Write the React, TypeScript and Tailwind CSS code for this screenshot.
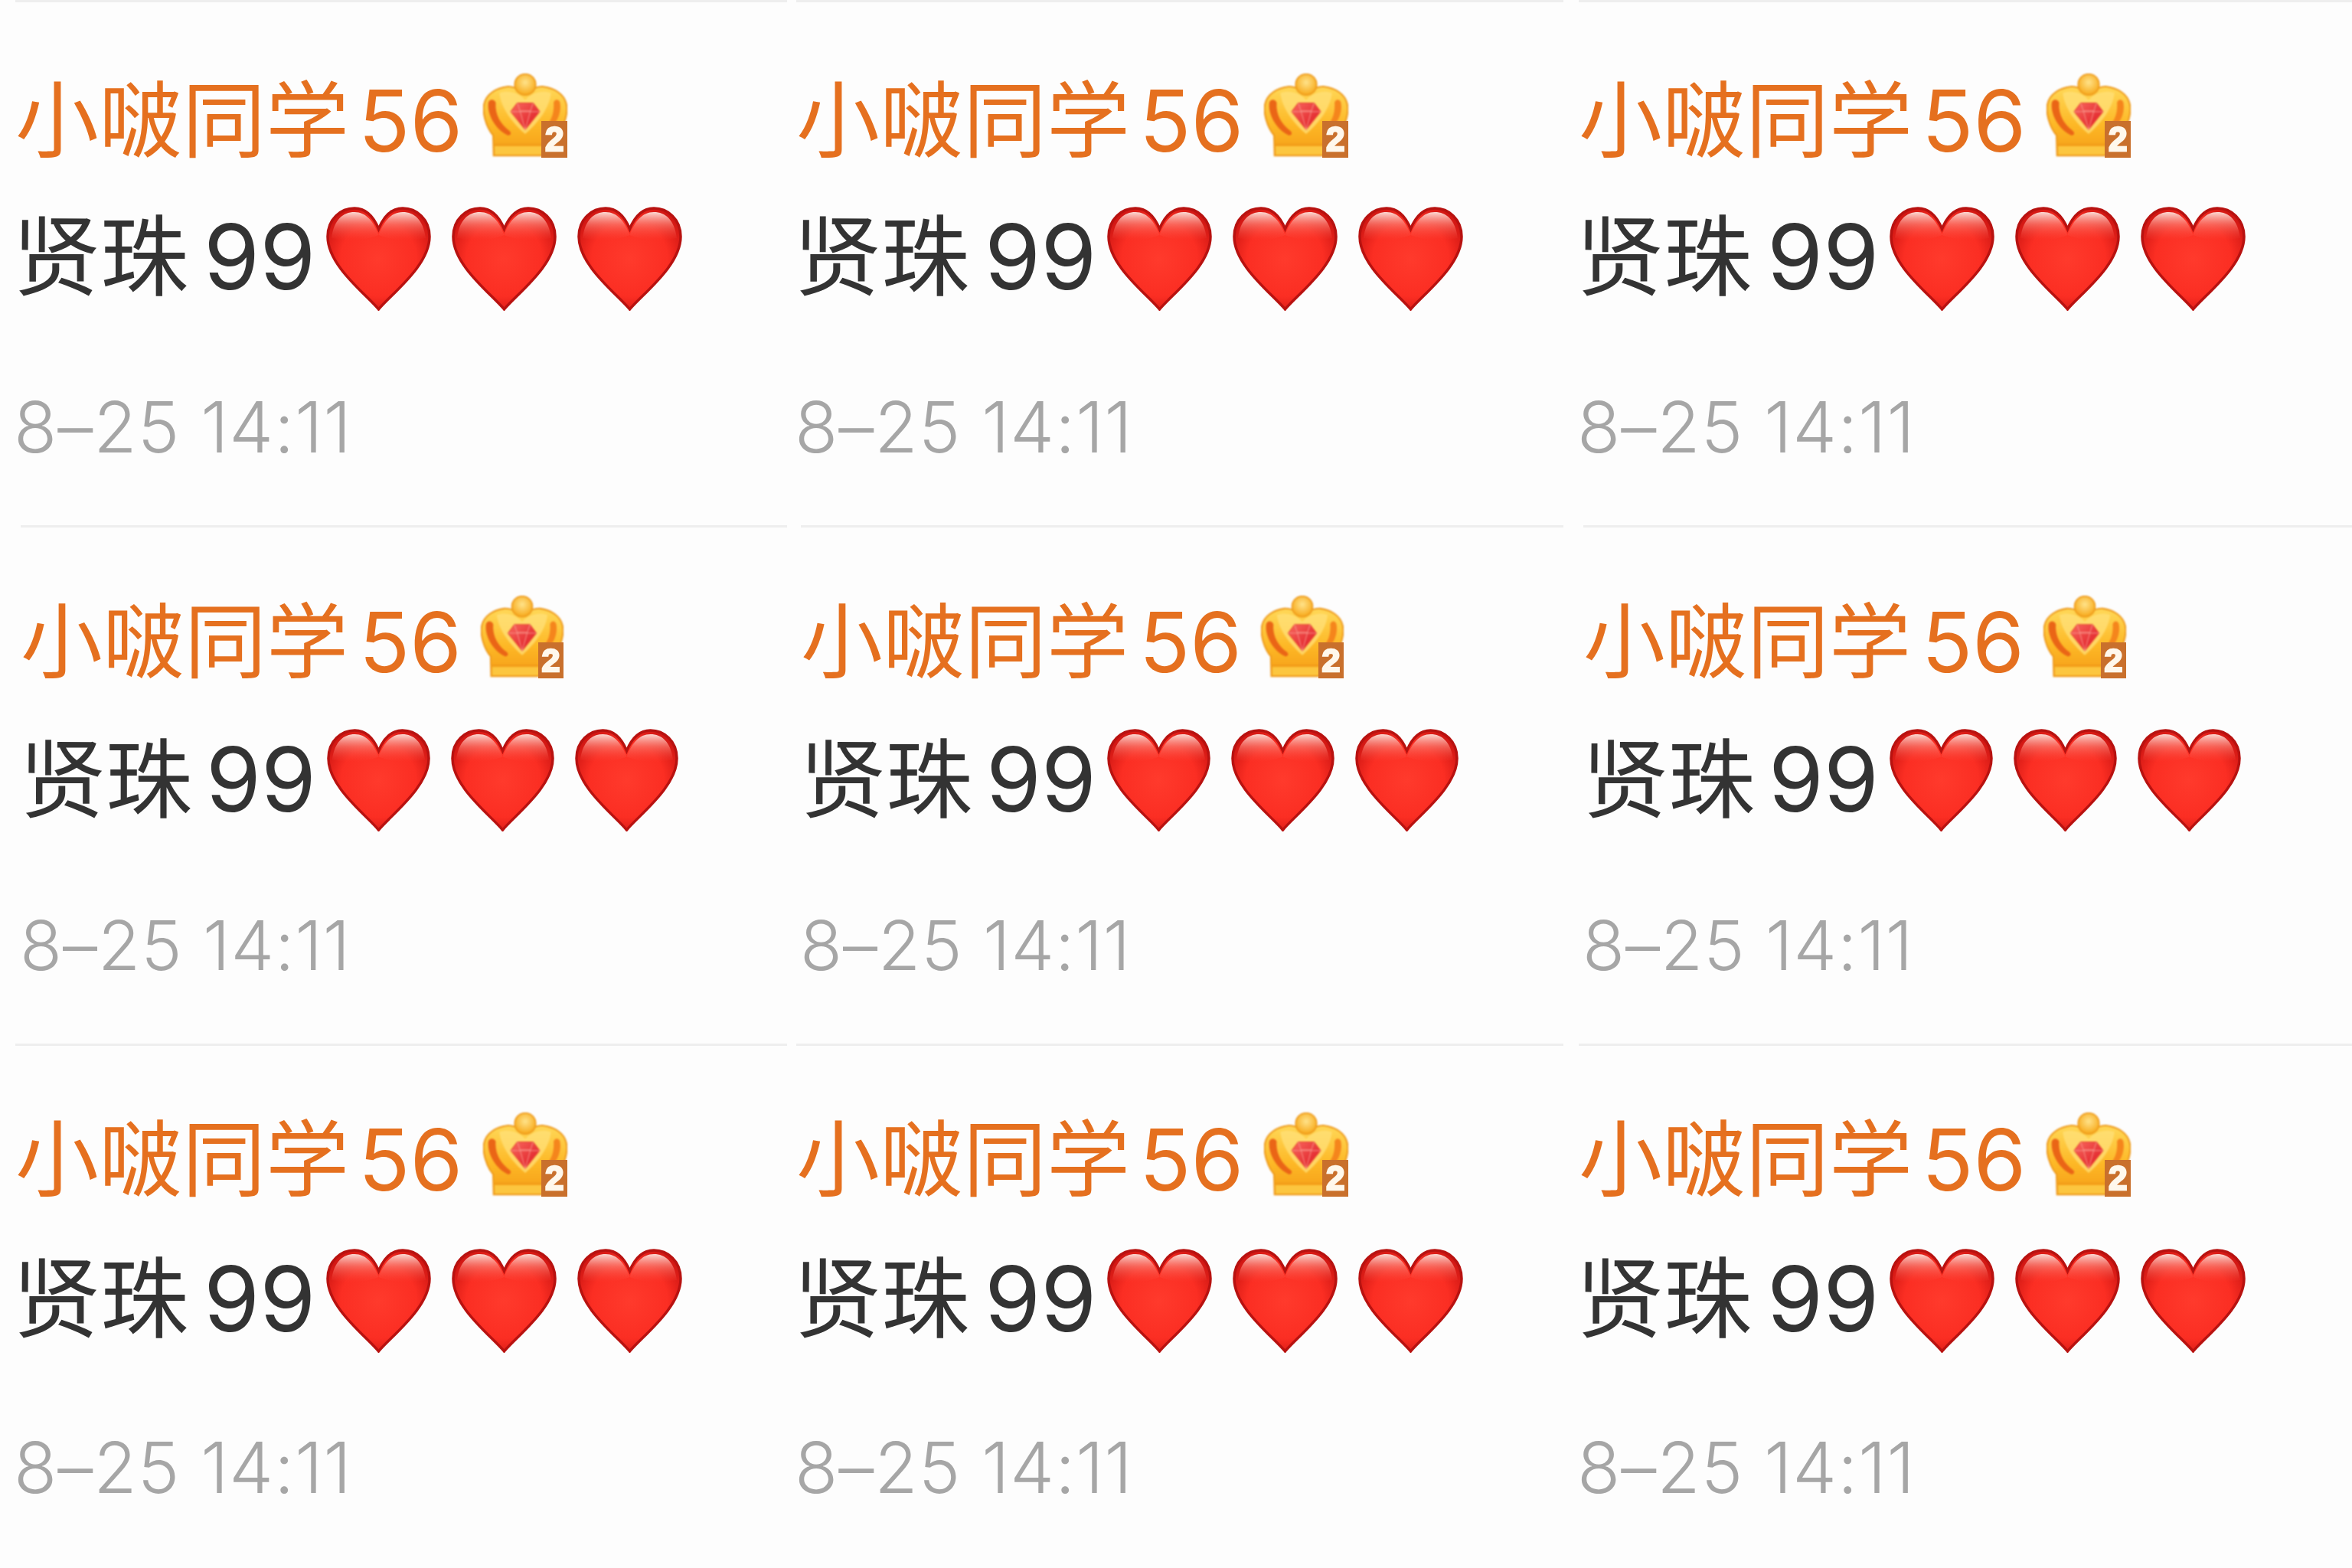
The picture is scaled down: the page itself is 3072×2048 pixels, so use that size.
import { useId } from "react";

const CJK = "font-['Inter','Noto_Sans_CJK_SC',sans-serif]";

function Heart({ className }: { className: string }) {
  const id = useId();
  return (
    <svg viewBox="-2 -2 137 137" className={`shrink-0 blur-[0.6px] ${className}`}>
      <defs>
        <radialGradient id={`${id}b`} cx="50%" cy="50%" r="62%">
          <stop offset="0%" stopColor="#ff3a2c" />
          <stop offset="60%" stopColor="#fb2e23" />
          <stop offset="100%" stopColor="#c81210" />
        </radialGradient>
        <linearGradient id={`${id}h`} x1="0" y1="0" x2="0" y2="1">
          <stop offset="0%" stopColor="#fcd8d2" />
          <stop offset="45%" stopColor="#fa7a6e" stopOpacity="0.7" />
          <stop offset="100%" stopColor="#fb4a3e" stopOpacity="0" />
        </linearGradient>
      </defs>
      <path
        d="M66.500 133C50 113 0 76 0 38 0 15 17 1 35 1c15 0 25 11 31.500 27C73 12 83 1 98 1c18 0 35 14 35 37 0 38-50 75-66.500 95z"
        fill={`url(#${id}b)`}
        stroke="#b81210"
        strokeWidth="3.500"
      />
      <path
        d="M66.500 36C60 18 50 6 35 6 20 6 8 16 5 40c20 4 42 4 61.500-4zM66.500 36C73 18 83 6 98 6c15 0 27 10 30 34-20 4-42 4-61.500-4z"
        fill={`url(#${id}h)`}
      />
    </svg>
  );
}

function Crown({ className, insignia }: { className: string; insignia: string }) {
  const id = useId();
  return (
    <div className={`relative shrink-0 ${className}`}>
      <svg viewBox="0 0 320 320" className="size-full blur-[0.8px]">
        <defs>
          <linearGradient id={`${id}c`} x1="0" y1="0" x2="0" y2="1">
            <stop offset="0%" stopColor="#ffd858" />
            <stop offset="55%" stopColor="#fdb826" />
            <stop offset="100%" stopColor="#f59c16" />
          </linearGradient>
          <linearGradient id={`${id}g`} x1="0" y1="0" x2="1" y2="1">
            <stop offset="0%" stopColor="#f8685e" />
            <stop offset="100%" stopColor="#dc1420" />
          </linearGradient>
          <radialGradient id={`${id}t`} cx="50%" cy="40%" r="60%">
            <stop offset="0%" stopColor="#ffe38a" />
            <stop offset="100%" stopColor="#f7a818" />
          </radialGradient>
        </defs>
        <path
          d="M40 312 38 235C12 205-4 150 4 115 12 78 50 55 90 50c25-3 50 10 70 20 20-10 45-23 70-20 40 5 78 28 86 65 8 35-8 90-34 120l-2 77z"
          fill={`url(#${id}c)`}
          stroke="#ee9a1c"
          strokeWidth="6"
        />
        <circle cx="160" cy="42" r="40" fill={`url(#${id}t)`} stroke="#ee9a1c" strokeWidth="5" />
        <path d="M20 110c-6 44 26 102 72 124 12 4 18-8 8-16-30-22-56-58-52-108-6-14-24-14-28 0z" fill="#ea6516" />
        <path d="M292 110c6 34-6 64-26 88l-16-12c14-20 20-44 18-76 4-14 20-14 24 0z" fill="#f5851c" />
        <path d="M62 74c6 60 54 118 98 156 44-38 92-96 98-156-34-12-72 0-98 26-26-26-64-38-98-26z" fill="#ffe07a" opacity="0.75" />
        <path d="M44 276h180v32H44z" fill="#fcc63f" />
        <path d="M42 270h184" stroke="#f09a18" strokeWidth="5" />
        <path d="M105 145 130 112h60l25 33-55 68z" fill={`url(#${id}g)`} stroke="#e8452e" strokeWidth="3" />
        <path d="M130 112 140 142h40l10-30M105 145h110M140 142l20 71 20-71" fill="none" stroke="#f9a094" strokeWidth="2.500" />
      </svg>
      <span
        className={`absolute flex items-center justify-center bg-[#c9702c] font-['Liberation_Sans',sans-serif] font-bold leading-none text-[#fff8ec] blur-[0.4px] [-webkit-text-stroke:2.500px_#fff8ec] ${insignia}`}
      >
        2
      </span>
    </div>
  );
}

type Fila = {
  celdas: string[];
  pad: string;
  nombreFila: string;
  nombre: string;
  digitos: string;
  corona: string;
  insignia: string;
  textoFila: string;
  texto: string;
  textoDigitos: string;
  corazones: string;
  corazon: string;
  fecha: string;
  fechaFila: string;
};

const FILA_GRANDE: Fila = {
  celdas: ["ml-[20px] w-[1008px]", "ml-[12px] w-[1002px]", "ml-[20px] w-[1010px]"],
  pad: "pt-[104px] pb-[78px]",
  nombreFila: "h-[100px]",
  nombre: "text-[109px]",
  digitos: "ml-[12px] text-[111px]",
  corona: "ml-[27px] size-[110px] -translate-y-[6px]",
  insignia: "right-0 bottom-0 h-[48px] w-[34px] text-[44px]",
  textoFila: "mt-[58px] h-[140px]",
  texto: "-ml-[4px] text-[115px]",
  textoDigitos: "ml-[20px] text-[118px]",
  corazones: "ml-[14px] gap-[27px] translate-y-[2px]",
  corazon: "size-[137px]",
  fecha: "-ml-[2px] text-[92px] tracking-[1px]",
  fechaFila: "mt-[103px] h-[100px]",
};

const FILA_CHICA: Fila = {
  celdas: ["ml-[27px] w-[1001px]", "ml-[18px] w-[996px]", "ml-[26px] w-[1004px]"],
  pad: "pt-[100px] pb-[79px]",
  nombreFila: "h-[98px]",
  nombre: "text-[107px]",
  digitos: "ml-[14px] text-[109px]",
  corona: "ml-[25px] size-[108px] -translate-y-[6px]",
  insignia: "right-0 bottom-0 h-[47px] w-[33px] text-[43px]",
  textoFila: "mt-[62px] h-[138px]",
  texto: "-ml-[2px] text-[113px]",
  textoDigitos: "ml-[18px] text-[116px]",
  corazones: "ml-[14px] gap-[27px]",
  corazon: "size-[135px]",
  fecha: "-ml-[1px] text-[90px] tracking-[1px]",
  fechaFila: "mt-[99px] h-[98px]",
};

const FILA_TERCERA: Fila = {
  ...FILA_GRANDE,
  pad: "pt-[98px] pb-[76px]",
  textoFila: "mt-[62px] h-[140px]",
  fechaFila: "mt-[101px] h-[100px]",
};

function Celda({ fila, ancho }: { fila: Fila; ancho: string }) {
  return (
    <div className={`shrink-0 border-t-[3px] border-[#eeeeee] ${ancho} ${fila.pad}`}>
      <div className={`flex items-center whitespace-nowrap leading-none text-[#e5701f] ${fila.nombreFila}`}>
        <span className={fila.nombre}>小啵同学</span>
        <span className={fila.digitos}>56</span>
        <Crown className={fila.corona} insignia={fila.insignia} />
      </div>
      <div className={`flex items-center whitespace-nowrap leading-none text-[#333333] ${fila.textoFila}`}>
        <span className={fila.texto}>贤珠</span>
        <span className={fila.textoDigitos}>99</span>
        <div className={`flex ${fila.corazones}`}>
          <Heart className={fila.corazon} />
          <Heart className={fila.corazon} />
          <Heart className={fila.corazon} />
        </div>
      </div>
      <div className={`flex items-center whitespace-nowrap leading-none text-[#a6a6a6] font-light ${fila.fechaFila}`}>
        <span className={fila.fecha}>8–25 14:11</span>
      </div>
    </div>
  );
}

export default function App() {
  const filas = [FILA_GRANDE, FILA_CHICA, FILA_TERCERA];
  return (
    <div className={`h-[2048px] w-[3072px] overflow-hidden bg-[#fdfdfd] ${CJK}`}>
      {filas.map((fila, i) => (
        <div key={i} className="flex">
          {fila.celdas.map((ancho, j) => (
            <Celda key={j} fila={fila} ancho={ancho} />
          ))}
        </div>
      ))}
    </div>
  );
}
